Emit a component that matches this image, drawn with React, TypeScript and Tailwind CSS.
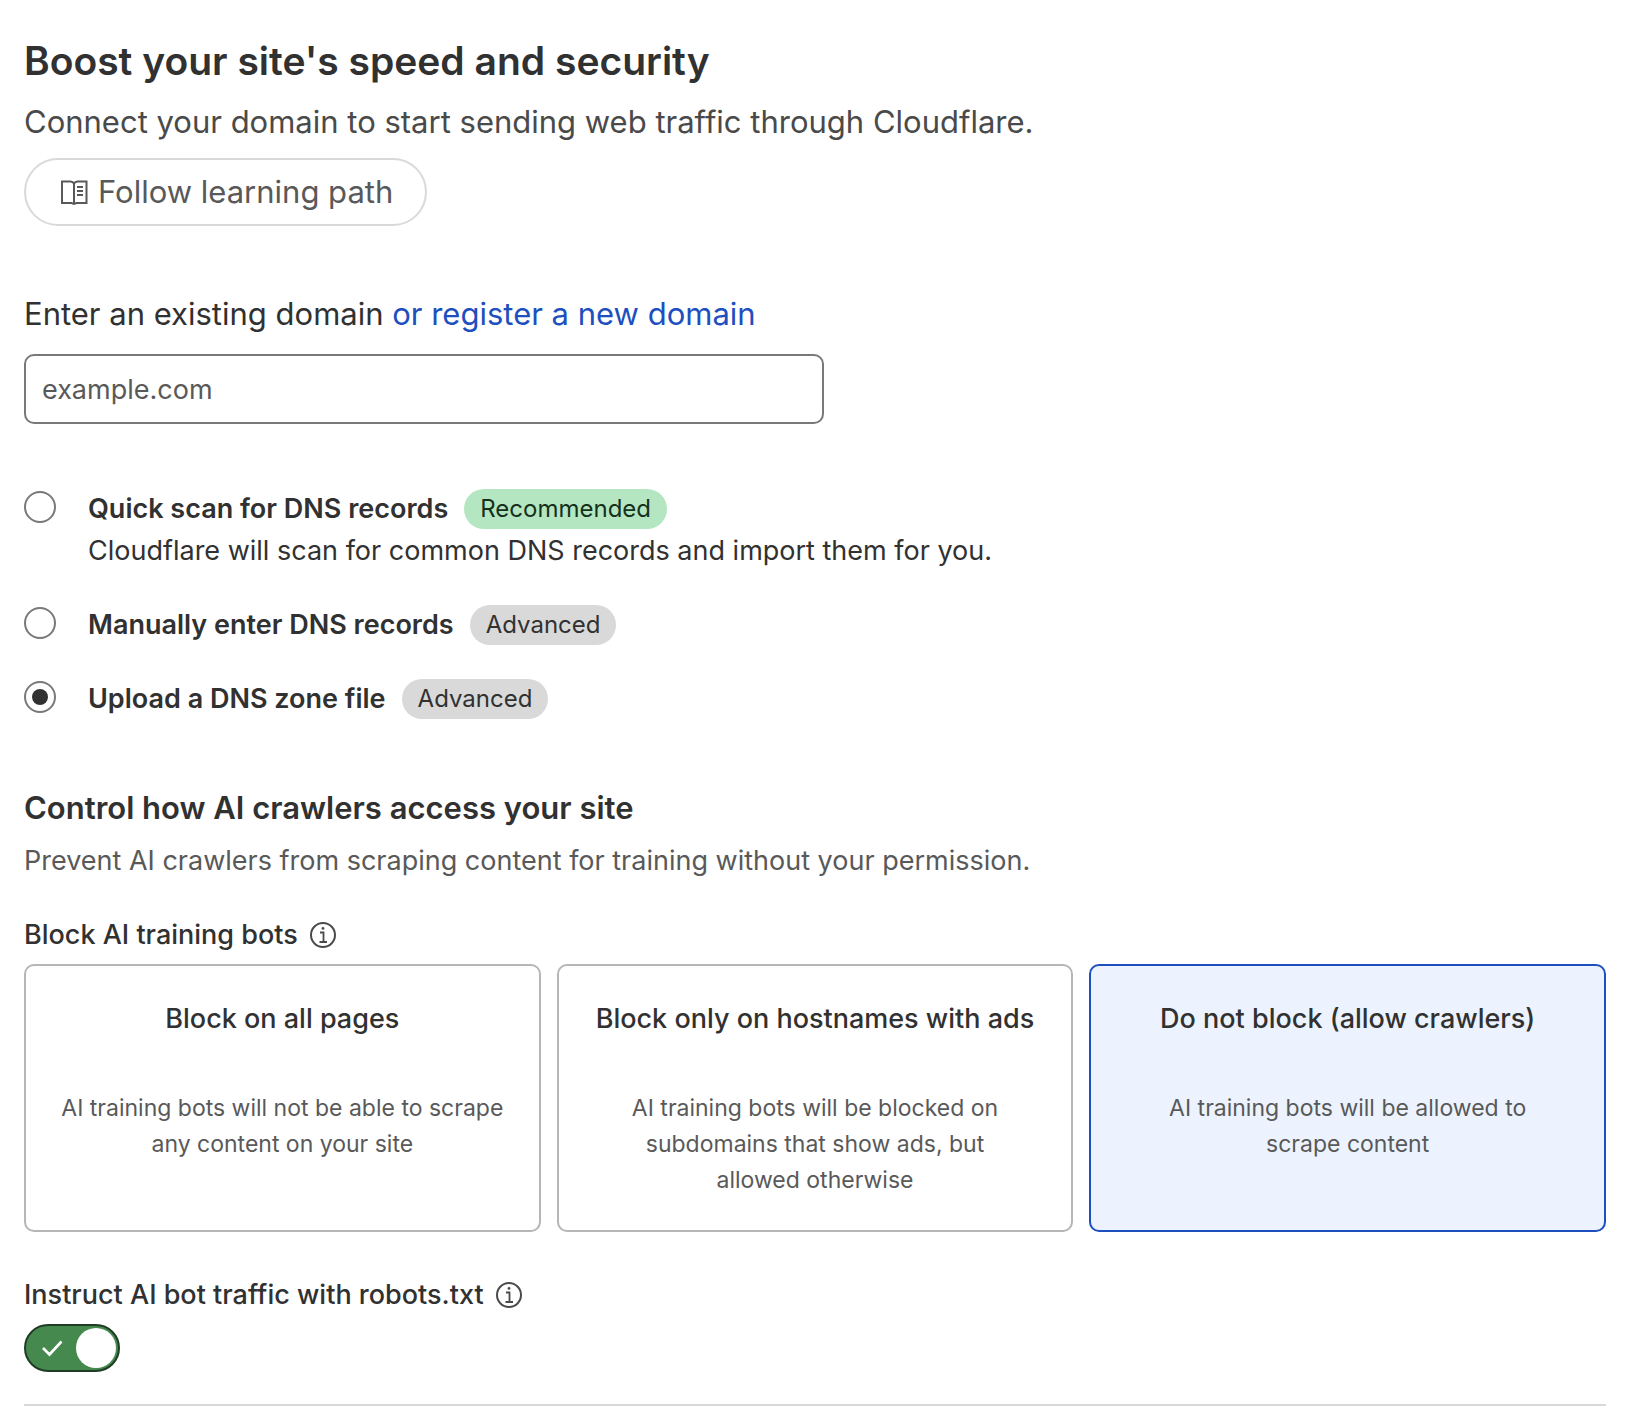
import { useState } from "react";
import clsx from "clsx";

const dnsOptions = [
  {
    id: "quick",
    label: "Quick scan for DNS records",
    badge: "Recommended",
    description: "Cloudflare will scan for common DNS records and import them for you.",
  },
  { id: "manual", label: "Manually enter DNS records", badge: "Advanced" },
  { id: "upload", label: "Upload a DNS zone file", badge: "Advanced" },
];

const blockOptions = [
  {
    id: "all",
    title: "Block on all pages",
    text: "AI training bots will not be able to scrape any content on your site",
  },
  {
    id: "ads",
    title: "Block only on hostnames with ads",
    text: "AI training bots will be blocked on subdomains that show ads, but allowed otherwise",
  },
  {
    id: "none",
    title: "Do not block (allow crawlers)",
    text: "AI training bots will be allowed to scrape content",
  },
];

function BookIcon() {
  return (
    <svg viewBox="0 0 32 32" className="size-8 shrink-0" fill="none" stroke="currentColor" strokeWidth="2" aria-hidden="true">
      <path d="M16 7.600c-.8-1.400-2-2.100-3.400-2.100H4v21.500h9.500l2.500 1 2.500-1H28.500V5.500H19.400c-1.400 0-2.600.700-3.400 2.100v20" />
      <path d="M19 11h6M19 15h6M19 19h6" />
    </svg>
  );
}

function InfoIcon() {
  return (
    <svg viewBox="0 0 26 26" className="size-[26px]" fill="none" stroke="currentColor" strokeWidth="2" aria-hidden="true">
      <circle cx="13" cy="13" r="12" />
      <path d="M10 10.500h3.500v9.500M9.500 20h7.500" strokeWidth="1.800" />
      <circle cx="13" cy="6.400" r="1.400" fill="currentColor" stroke="none" />
    </svg>
  );
}

function InfoButton({ label }: { label: string }) {
  return (
    <button type="button" aria-label={label} className="text-[#4a4a4a]">
      <InfoIcon />
    </button>
  );
}

export default function App() {
  const [domain, setDomain] = useState("");
  const [dns, setDns] = useState("upload");
  const [block, setBlock] = useState("none");
  const [robots, setRobots] = useState(true);

  return (
    <main className="bg-white px-6 pt-9 font-['Inter',sans-serif] text-[27px] leading-[42px] text-[#313131]">
      <header>
        <h1 className="text-[39px] leading-[50px] font-semibold">Boost your site's speed and security</h1>
        <p className="mt-3 text-[31px] leading-[48px] text-[#4a4a4a]">
          Connect your domain to start sending web traffic through Cloudflare.
        </p>
        <button
          type="button"
          className="mt-3 flex h-[68px] items-center gap-2 rounded-full border-2 border-[#d9d9d9] px-8 text-[31px] text-[#595959]"
        >
          <BookIcon />
          Follow learning path
        </button>
      </header>

      {/* Domain */}
      <section className="mt-16">
        <div className="text-[31px] leading-[48px]">
          <label htmlFor="domain">Enter an existing domain</label>{" "}
          <a href="#register" className="text-[#1d4fbf]">or register a new domain</a>
        </div>
        <input
          id="domain"
          value={domain}
          onChange={(e) => setDomain(e.target.value)}
          placeholder="example.com"
          className="mt-4 block h-[70px] w-full max-w-[800px] rounded-[10px] border-2 border-[#797979] px-4 placeholder:text-[#595959]"
        />
      </section>

      {/* DNS records */}
      <div role="radiogroup" aria-label="DNS records" className="mt-16 flex flex-col gap-8">
        {dnsOptions.map((o) => (
          <div key={o.id} className="flex items-start gap-8">
            <input
              type="radio"
              id={`dns-${o.id}`}
              name="dns"
              checked={dns === o.id}
              onChange={() => setDns(o.id)}
              className="mt-[3px] grid size-8 shrink-0 appearance-none place-items-center rounded-full border-2 border-[#797979] before:size-4 before:rounded-full checked:before:bg-[#313131]"
            />
            <div>
              <label htmlFor={`dns-${o.id}`} className="flex items-center gap-4">
                <span className="font-semibold">{o.label}</span>
                <span
                  className={clsx(
                    "h-10 rounded-full px-4 text-2xl leading-10",
                    o.badge === "Recommended" ? "bg-[#b4e7c1] text-[#17301c]" : "bg-[#d9d9d9]"
                  )}
                >
                  {o.badge}
                </span>
              </label>
              {o.description && <p>{o.description}</p>}
            </div>
          </div>
        ))}
      </div>

      {/* AI crawlers */}
      <section className="mt-16">
        <h2 className="text-[31px] leading-[48px] font-semibold">Control how AI crawlers access your site</h2>
        <p className="mt-2 text-[#595959]">
          Prevent AI crawlers from scraping content for training without your permission.
        </p>

        <div className="mt-8 flex items-center gap-3 font-medium">
          <h3 id="block-label">Block AI training bots</h3>
          <InfoButton label="About blocking AI training bots" />
        </div>
        <div role="radiogroup" aria-labelledby="block-label" className="mt-2 grid grid-cols-3 gap-4">
          {blockOptions.map((o) => (
            <label
              key={o.id}
              className={clsx(
                "relative rounded-[10px] border-2 p-8 text-center",
                block === o.id ? "border-[#1d4fbf] bg-[#ecf3fe]" : "border-[#b6b6b6]"
              )}
            >
              <input
                type="radio"
                name="block"
                checked={block === o.id}
                onChange={() => setBlock(o.id)}
                className="sr-only"
              />
              <span className="block font-medium">{o.title}</span>
              <span className="mt-[50px] block text-[23px] leading-9 text-pretty text-[#595959]">{o.text}</span>
            </label>
          ))}
        </div>

        <div className="mt-[42px] flex items-center gap-3 font-medium">
          <h3 id="robots-label">Instruct AI bot traffic with robots.txt</h3>
          <InfoButton label="About robots.txt" />
        </div>
        <button
          type="button"
          role="switch"
          aria-checked={robots}
          aria-labelledby="robots-label"
          onClick={() => setRobots(!robots)}
          className={clsx(
            "mt-2 flex h-12 w-24 items-center justify-between rounded-full border-2 pr-[2px] pl-4",
            robots ? "border-[#1f3d25] bg-[#46894f]" : "flex-row-reverse border-[#797979] bg-[#b6b6b6]"
          )}
        >
          <svg viewBox="0 0 22 22" className="size-[22px]" fill="none" stroke="white" strokeWidth="2.600" aria-hidden="true">
            <path d="M1 11l6.500 6.500L19.500 4.500" />
          </svg>
          <span className="size-10 rounded-full bg-white" />
        </button>
      </section>

      <hr className="mt-8 border-t-2 border-[#d9d9d9]" />
    </main>
  );
}
